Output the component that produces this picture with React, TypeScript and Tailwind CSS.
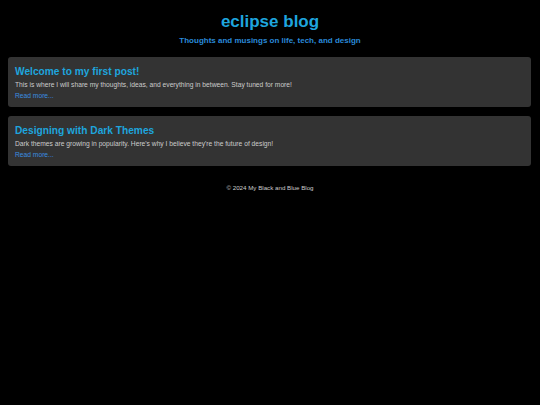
const posts = [
  {
    title: 'Welcome to my first post!',
    body: 'This is where I will share my thoughts, ideas, and everything in between. Stay tuned for more!',
  },
  {
    title: 'Designing with Dark Themes',
    body: "Dark themes are growing in popularity. Here's why I believe they're the future of design!",
  },
];

export default function App() {
  return (
    <div className="min-h-screen w-full bg-black text-[#cccccc] font-['Liberation_Sans',Arial,sans-serif]">
      <header className="pt-[12px] text-center">
        <h1 className="text-[17px] leading-[20px] font-bold text-[#1ea5de]">eclipse blog</h1>
        <p className="mt-[4px] text-[8px] leading-[10px] font-bold text-[#2a8ad9]">
          Thoughts and musings on life, tech, and design
        </p>
      </header>

      <main className="mt-[11px] pl-[8px] pr-[9px] flex flex-col gap-[9px]">
        {posts.map((post) => (
          <article key={post.title} className="bg-[#333333] rounded-[3px] px-[7px] pt-[9px] pb-[7px]">
            <h2 className="text-[10.2px] leading-[12px] font-bold text-[#1ea5de]">{post.title}</h2>
            <p className="mt-[2px] text-[6.7px] leading-[9px] text-[#cccccc]">{post.body}</p>
            <a href="#" className="block mt-[2px] text-[6.7px] leading-[9px] text-[#3a8ee0]">
              Read more...
            </a>
          </article>
        ))}
      </main>

      <footer className="mt-[17px] text-center text-[6.2px] leading-[9px] text-[#cccccc]">
        © 2024 My Black and Blue Blog
      </footer>
    </div>
  );
}
